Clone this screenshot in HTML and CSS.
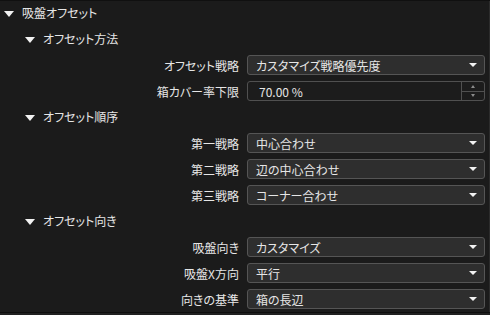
FILE: index.html
```html
<!DOCTYPE html>
<html lang="ja">
<head>
    <meta charset="UTF-8">
    <title>吸盤オフセット</title>
    <link rel="stylesheet" href="styles.css">
</head>
<body>
    <div class="panel">
        <div class="group-head"><span class="caret"></span>吸盤オフセット</div>

        <div class="sub-head"><span class="caret"></span>オフセット方法</div>
        <div class="row">
            <label>オフセット戦略</label>
            <div class="select">カスタマイズ戦略優先度<span class="arrow"></span></div>
        </div>
        <div class="row">
            <label>箱カバー率下限</label>
            <div class="spin">
                <span class="value">70.00 %</span>
                <div class="spin-btns">
                    <span class="up"></span>
                    <span class="down"></span>
                </div>
            </div>
        </div>

        <div class="sub-head"><span class="caret"></span>オフセット順序</div>
        <div class="row">
            <label>第一戦略</label>
            <div class="select">中心合わせ<span class="arrow"></span></div>
        </div>
        <div class="row">
            <label>第二戦略</label>
            <div class="select">辺の中心合わせ<span class="arrow"></span></div>
        </div>
        <div class="row">
            <label>第三戦略</label>
            <div class="select">コーナー合わせ<span class="arrow"></span></div>
        </div>

        <div class="sub-head"><span class="caret"></span>オフセット向き</div>
        <div class="row">
            <label>吸盤向き</label>
            <div class="select">カスタマイズ<span class="arrow"></span></div>
        </div>
        <div class="row">
            <label>吸盤X方向</label>
            <div class="select">平行<span class="arrow"></span></div>
        </div>
        <div class="row">
            <label>向きの基準</label>
            <div class="select">箱の長辺<span class="arrow"></span></div>
        </div>
    </div>
</body>
</html>
```

FILE: styles.css
```css
html, body {
    margin: 0;
    padding: 0;
}
body {
    width: 490px;
    height: 315px;
    background: #202020;
    font-family: "Noto Sans CJK JP", "Noto Sans", sans-serif;
    font-size: 12px;
    font-feature-settings: "palt";
    color: #e6e6e6;
    overflow: hidden;
}
.panel {
    height: 312px;
    background: #1b1b1b;
    box-shadow: inset 0 1px 0 #101010, inset -1px 0 0 #2c2c2c;
    border-bottom: 1px solid #0e0e0e;
}
.group-head,
.sub-head {
    display: flex;
    align-items: center;
    height: 26px;
    line-height: 26px;
}
.group-head {
    padding-left: 4px;
}
.sub-head {
    padding-left: 25px;
}
.caret {
    width: 0;
    height: 0;
    border-left: 5px solid transparent;
    border-right: 5px solid transparent;
    border-top: 6px solid #f2f2f2;
    margin-right: 8px;
    margin-top: 1px;
}
.group-head .caret {
    border-left-width: 5.5px;
    border-right-width: 5.5px;
}
.row {
    display: flex;
    align-items: center;
    height: 26px;
    padding-right: 5px;
}
.row label {
    width: 239px;
    text-align: right;
    padding-right: 8px;
    flex-shrink: 0;
}
.select {
    flex: 1;
    height: 20px;
    box-sizing: border-box;
    display: flex;
    align-items: center;
    padding-left: 8px;
    background: #2e2e2e;
    border: 1px solid #555;
    border-radius: 3px;
    position: relative;
}
.arrow {
    position: absolute;
    right: 7px;
    top: 7px;
    width: 0;
    height: 0;
    border-left: 4px solid transparent;
    border-right: 4px solid transparent;
    border-top: 4px solid #f2f2f2;
}
.spin {
    flex: 1;
    height: 20px;
    box-sizing: border-box;
    display: flex;
    align-items: center;
    background: #1c1c1c;
    border: 1px solid #505050;
    border-radius: 3px;
}
.spin .value {
    flex: 1;
    padding-left: 11px;
}
.spin-btns {
    width: 22px;
    height: 100%;
    border-left: 1px solid #505050;
    display: flex;
    flex-direction: column;
}
.spin-btns span {
    flex: 1;
    display: flex;
    align-items: center;
    justify-content: center;
}
.spin-btns .up {
    border-bottom: 1px solid #505050;
}
.spin-btns .up::after,
.spin-btns .down::after {
    content: "";
    width: 0;
    height: 0;
    border-left: 2.5px solid transparent;
    border-right: 2.5px solid transparent;
}
.spin-btns .up::after {
    border-bottom: 3px solid #8a8a8a;
}
.spin-btns .down::after {
    border-top: 3px solid #8a8a8a;
}
```
